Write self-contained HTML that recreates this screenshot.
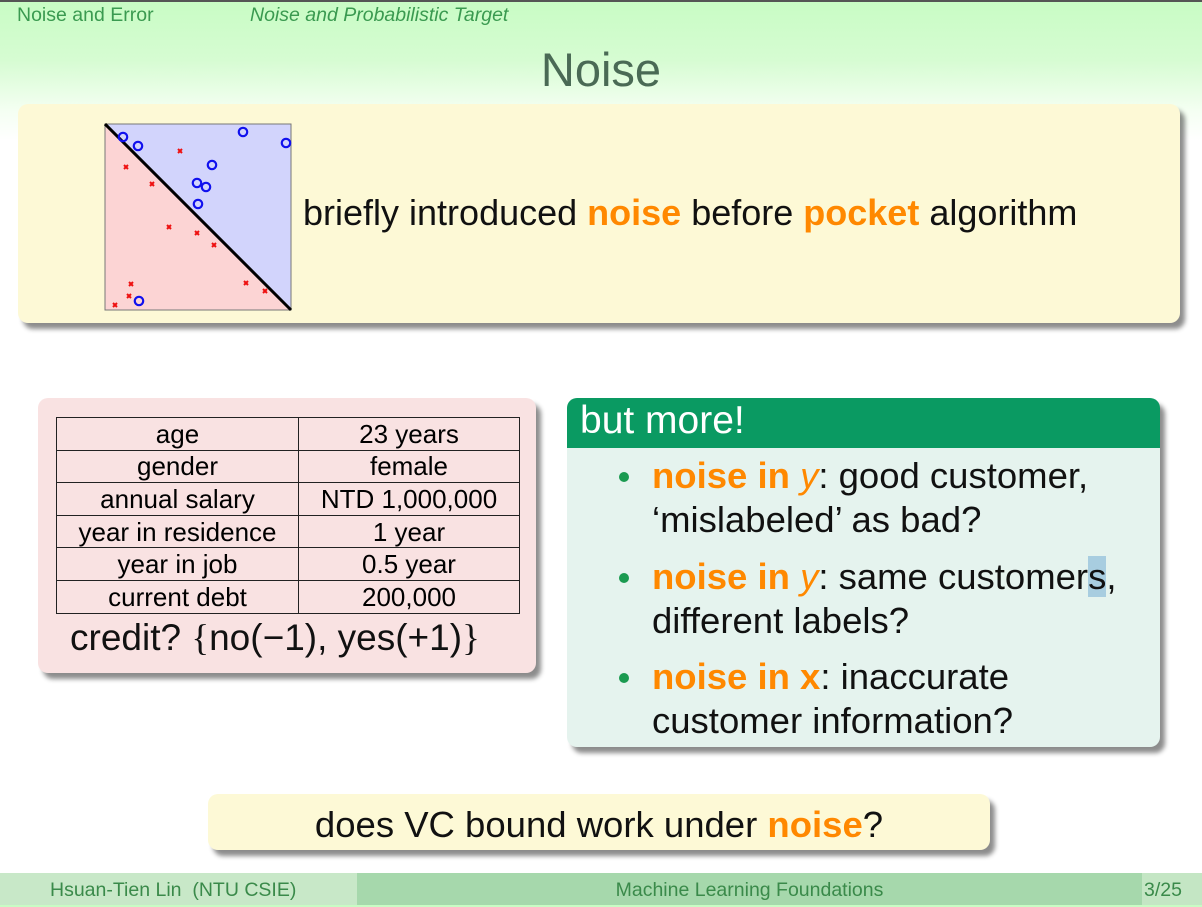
<!DOCTYPE html>
<html><head><meta charset="utf-8"><style>
*{margin:0;padding:0;box-sizing:border-box}
body{width:1202px;height:905px;overflow:hidden;position:relative;font-family:"Liberation Sans",sans-serif;background:linear-gradient(#c8fcc4 0px,#d6fcd2 60px,#f4fff2 110px,#fff 140px);}
.abs{position:absolute}
.top{left:0;top:0;width:1202px;height:2px;background:#555}
.hdr{top:4px;font-size:19.5px;color:#3a9a50}
.title{left:0;width:1202px;top:42px;text-align:center;font-size:47px;color:#4a6a55}
.box{border-radius:10px;box-shadow:5px 6px 5px rgba(0,0,0,0.45)}
.or{color:#ff8800;font-weight:bold}
table{border-collapse:collapse;font-size:26px}
td{border:1.5px solid #222;text-align:center;height:32.6px;padding:0;line-height:28px}
.li{position:absolute;left:85px;font-size:36.5px;line-height:44px;color:#111;white-space:nowrap}
.dot{position:absolute;left:-33px;top:18px;width:10px;height:10px;border-radius:50%;background:#1a9a50}
.y{color:#ff8800;font-style:italic;font-weight:normal}
</style></head><body>
<div class="abs top"></div>
<div class="abs hdr" style="left:17px">Noise and Error</div>
<div class="abs hdr" style="left:250px;font-style:italic">Noise and Probabilistic Target</div>
<div class="abs title">Noise</div>

<div class="abs box" style="left:18px;top:104px;width:1162px;height:219px;background:#fdf9d6"></div>
<svg class="abs" style="left:104px;top:123px" width="189" height="189" viewBox="104 123 189 189">
<polygon points="105,124 291,124 291,310" fill="#d2d4fc"/>
<polygon points="105,124 105,310 291,310" fill="#fcd4d4"/>
<rect x="105" y="124" width="186" height="186" fill="none" stroke="#777" stroke-width="1"/>
<line x1="105" y1="124" x2="291" y2="310" stroke="#000" stroke-width="3"/>
<g fill="none" stroke="#1010ee" stroke-width="2.2">
<circle cx="123" cy="137" r="4.2"/><circle cx="138" cy="146" r="4.2"/><circle cx="243" cy="132" r="4.2"/><circle cx="286" cy="143" r="4.2"/><circle cx="212" cy="165" r="4.2"/><circle cx="197" cy="183" r="4.2"/><circle cx="206" cy="187" r="4.2"/><circle cx="198" cy="204" r="4.2"/><circle cx="139" cy="301" r="4.2"/>
</g>
<g stroke="#ee1010" stroke-width="2">
<path d="M178,149l4,4M182,149l-4,4 M124,165l4,4M128,165l-4,4 M150,182l4,4M154,182l-4,4 M167,225l4,4M171,225l-4,4 M195,231l4,4M199,231l-4,4 M212,243l4,4M216,243l-4,4 M129,282l4,4M133,282l-4,4 M127,294l4,4M131,294l-4,4 M113,303l4,4M117,303l-4,4 M244,281l4,4M248,281l-4,4 M263,289l4,4M267,289l-4,4"/>
</g>
</svg>
<div class="abs" style="left:303px;top:192px;font-size:36px;color:#111;white-space:nowrap">briefly introduced <span class="or">noise</span> before <span class="or">pocket</span> algorithm</div>

<div class="abs box" style="left:38px;top:398px;width:498px;height:275px;background:#f9e2e2"></div>
<table class="abs" style="left:56px;top:417px;width:464px">
<tr><td style="width:242px">age</td><td>23 years</td></tr>
<tr><td>gender</td><td>female</td></tr>
<tr><td>annual salary</td><td>NTD 1,000,000</td></tr>
<tr><td>year in residence</td><td>1 year</td></tr>
<tr><td>year in job</td><td>0.5 year</td></tr>
<tr><td>current debt</td><td>200,000</td></tr>
</table>
<div class="abs" style="left:70px;top:617px;font-size:37px;color:#111;white-space:nowrap">credit? <span style="font-family:'Liberation Serif',serif">{</span>no(−1), yes(+1)<span style="font-family:'Liberation Serif',serif">}</span></div>

<div class="abs box" style="left:567px;top:398px;width:593px;height:349px;background:#e5f3ee;overflow:hidden">
<div style="height:50px;background:#0a9a62;color:#fff;font-size:39px;padding:1px 0 0 13px">but more!</div>
<div class="li" style="top:56px"><span class="dot"></span><span class="or">noise in <span class="y">y</span></span>: good customer,<br>‘mislabeled’ as bad?</div>
<div class="li" style="top:157px"><span class="dot"></span><span class="or">noise in <span class="y">y</span></span>: same customer<span style="background:#a8cde0">s</span>,<br>different labels?</div>
<div class="li" style="top:257px"><span class="dot"></span><span class="or">noise in x</span>: inaccurate<br>customer information?</div>
</div>

<div class="abs box" style="left:208px;top:794px;width:782px;height:56px;background:#fdf9d6;text-align:center;font-size:36.5px;line-height:62px;color:#111">does VC bound work under <span class="or">noise</span>?</div>

<div class="abs" style="left:0;top:873px;width:357px;height:32px;background:#c8e8c8;color:#3a8a4a;font-size:19.5px;line-height:34px;padding-left:50px;white-space:nowrap">Hsuan-Tien Lin&nbsp; (NTU CSIE)</div>
<div class="abs" style="left:357px;top:873px;width:785px;height:32px;background:#a6d8ac;color:#3a8a4a;font-size:19.5px;line-height:34px;text-align:center">Machine Learning Foundations</div>
<div class="abs" style="left:1142px;top:873px;width:60px;height:32px;background:#c4e6c4;color:#3a8a4a;font-size:19.5px;line-height:34px;padding-left:2px">3/25</div>
</body></html>
